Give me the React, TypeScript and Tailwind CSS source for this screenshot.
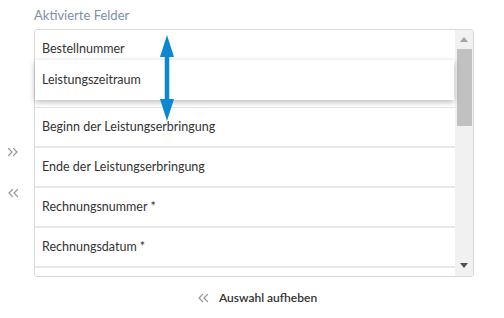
import React from "react";

const rows = [
  "Beginn der Leistungserbringung",
  "Ende der Leistungserbringung",
  "Rechnungsnummer *",
  "Rechnungsdatum *",
];

function DoubleChevron({ dir }: { dir: "left" | "right" }) {
  return (
    <svg width="12" height="10" viewBox="0 0 12 10" fill="none" stroke="#9a9a9a" strokeWidth="1.3" strokeLinecap="round" strokeLinejoin="round">
      {dir === "right" ? (
        <>
          <path d="M1.5 1.5 L5 5 L1.5 8.5" />
          <path d="M6.5 1.5 L10 5 L6.5 8.5" />
        </>
      ) : (
        <>
          <path d="M5.5 1.5 L2 5 L5.5 8.5" />
          <path d="M10.5 1.5 L7 5 L10.5 8.5" />
        </>
      )}
    </svg>
  );
}

export default function App() {
  return (
    <div
      className="relative w-[504px] h-[318px] bg-white overflow-hidden"
      style={{ fontFamily: "Lato, 'Noto Sans', sans-serif" }}
    >
      <div className="flex">
        <div className="w-[34px] flex flex-col items-start pl-[7px] pt-[147px] gap-[31px]">
          <DoubleChevron dir="right" />
          <DoubleChevron dir="left" />
        </div>
        <div className="w-[440px] flex flex-col">
          <div className="h-[29px] pt-[7px] text-[13px] leading-[17px] text-[#8090a6]">
            Aktivierte Felder
          </div>
          <div className="h-[248px] border border-[#d9d9d9] rounded-[3px] flex overflow-hidden">
            <div className="flex-1 flex flex-col">
              <div className="h-[39px] shrink-0 border-b border-[#e6e6e6] flex items-center pl-[7px] text-[12.5px] text-[#333]">
                Bestellnummer
              </div>
              <div className="h-[39px] shrink-0 border-b border-[#e6e6e6]" />
              {rows.map((r) => (
                <div
                  key={r}
                  className="h-[40px] shrink-0 border-b-2 border-[#e8e8e8] flex items-center pl-[7px] text-[12.5px] text-[#333]"
                >
                  {r}
                </div>
              ))}
              <div className="h-[20px] shrink-0" />
            </div>
            <div className="w-[18px] bg-[#f1f1f1] flex flex-col items-center">
              <div className="h-[18px] w-full flex items-center justify-center">
                <svg width="8" height="5" viewBox="0 0 8 5">
                  <path d="M0 5 L4 0 L8 5 Z" fill="#a3a3a3" />
                </svg>
              </div>
              <div className="mt-[1px] h-[77px] w-[15px] bg-[#c1c1c1]" />
              <div className="flex-1" />
              <div className="h-[20px] pb-[2px] w-full flex items-center justify-center">
                <svg width="8" height="5" viewBox="0 0 8 5">
                  <path d="M0 0 L8 0 L4 5 Z" fill="#505050" />
                </svg>
              </div>
            </div>
          </div>
          <div className="flex items-center justify-center pt-[12px] pl-[6px] gap-[10px]">
            <DoubleChevron dir="left" />
            <span className="text-[12px] font-semibold text-[#333]">Auswahl aufheben</span>
          </div>
        </div>
      </div>

      {/* dragged item */}
      <div className="absolute left-[35px] top-[60px] w-[419px] h-[40px] bg-white flex items-center pl-[7px] pt-[1px] text-[12.5px] text-[#333] shadow-[0_2px_6px_rgba(0,0,0,0.28)]">
        Leistungszeitraum
      </div>

      {/* drag arrow */}
      <svg className="absolute left-[159px] top-[35px]" width="16" height="86" viewBox="0 0 16 86">
        <path d="M8 0 L15 22 L1 22 Z" fill="#0b88d0" />
        <rect x="5.75" y="20" width="4.5" height="46" fill="#0b88d0" />
        <path d="M1 64 L15 64 L8 86 Z" fill="#0b88d0" />
      </svg>
    </div>
  );
}
